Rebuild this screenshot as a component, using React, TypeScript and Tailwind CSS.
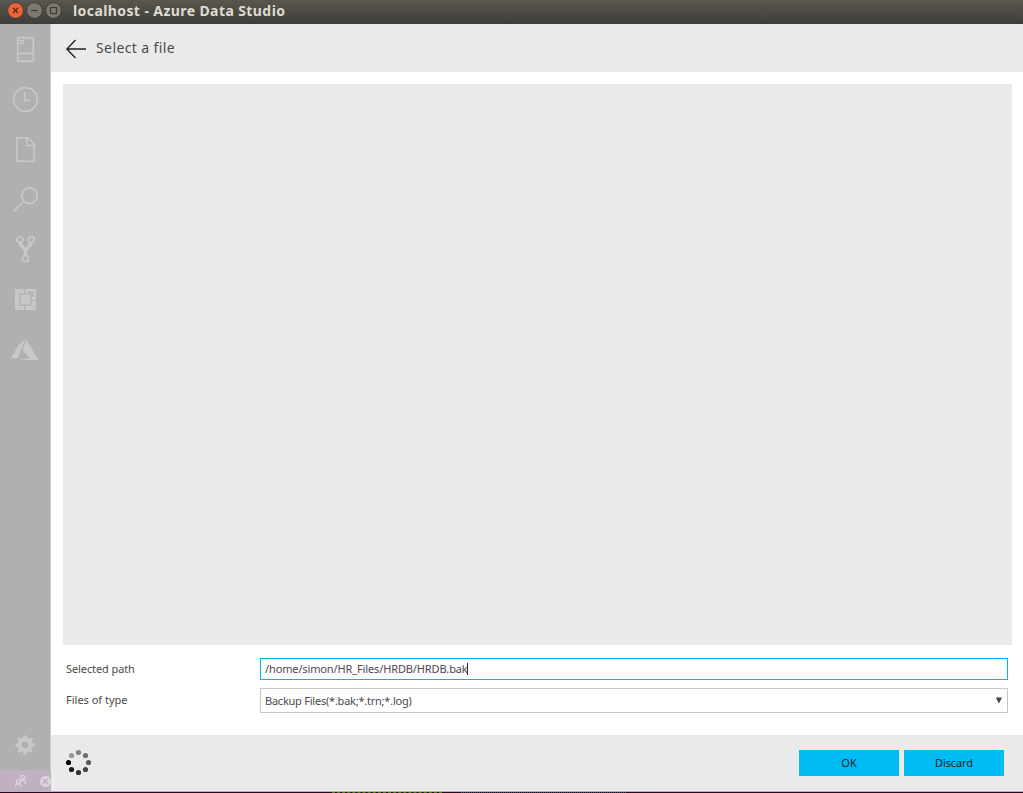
import React from 'react';

// Activity bar icons, each drawn in a 30px box
const activityItems = [
  {
    id: 'servers',
    icon: (
      <svg width="30" height="30" viewBox="0 0 30 30" fill="none" stroke="currentColor" strokeWidth="1.7"><rect x="7.8" y="3.8" width="15.5" height="23.5"/><path d="M7.7 19.5h15.6"/><rect x="10.5" y="6.5" width="3" height="3" strokeWidth="1.2"/></svg>
    ),
  },
  {
    id: 'history',
    icon: (
      <svg width="30" height="30" viewBox="0 0 30 30" fill="none" stroke="currentColor" strokeWidth="1.7"><circle cx="15.5" cy="15.5" r="11.8"/><path d="M14.7 8v8.3h5.5"/></svg>
    ),
  },
  {
    id: 'explorer',
    icon: (
      <svg width="30" height="30" viewBox="0 0 30 30" fill="none" stroke="currentColor" strokeWidth="1.6"><path d="M6.8 3.8H18l6.2 6v17.5H6.8z"/><path d="M16.7 3.8v7.7h7.6"/></svg>
    ),
  },
  {
    id: 'search',
    icon: (
      <svg width="30" height="30" viewBox="0 0 30 30" fill="none" stroke="currentColor" strokeWidth="1.7"><circle cx="19.5" cy="11.5" r="7.8"/><path d="M14 17 3.3 27.7"/></svg>
    ),
  },
  {
    id: 'scm',
    icon: (
      <svg width="30" height="30" viewBox="0 0 30 30" fill="none" stroke="currentColor"><g strokeWidth="1.7"><circle cx="9.8" cy="5.5" r="3"/><circle cx="21.2" cy="5.5" r="3"/><circle cx="15.5" cy="24.5" r="3"/></g><path d="M10.2 9c0 3.5 5.3 4.5 5.3 8v4M20.8 9c0 3.5-5.3 4.5-5.3 8" strokeWidth="3.4"/></svg>
    ),
  },
  {
    id: 'extensions',
    icon: (
      <svg width="30" height="30" viewBox="0 0 30 30" fill="none" stroke="#b0b0b0"><path d="M5 5h21v21H5z" fill="currentColor" stroke="none"/><path d="M10 10.2h11v11H10z" strokeWidth="1.2"/><path d="M14.7 5v5M14.7 21.5V26M21 16.5h5" strokeWidth="1.2"/><path d="M18 8.5h4.5V13" strokeWidth="1.8"/></svg>
    ),
  },
  {
    id: 'azure',
    icon: (
      <svg width="30" height="30" viewBox="0 0 30 30" fill="currentColor"><path d="M15.5 5 8.5 11 1.2 24.2h6.5z"/><path d="m16.3 6-3.8 10.3 7 7.9L9 26.1h19.8z"/></svg>
    ),
  },
];

// Spinner dots, clockwise from the top
const dots = [
  { cx: 13.5, cy: 4.5, fill: '#808080' },
  { cx: 20.5, cy: 7.5, fill: '#6b6b6b' },
  { cx: 23.5, cy: 14.5, fill: '#5a5a5a' },
  { cx: 20.5, cy: 21.5, fill: '#444444' },
  { cx: 13.5, cy: 24.5, fill: '#303030' },
  { cx: 6.5, cy: 21.5, fill: '#1c1c1c' },
  { cx: 3.5, cy: 14.5, fill: '#080808' },
  { cx: 6.5, cy: 7.5, fill: '#969696' },
];

const TitleBar: React.FC = () => (
  <div className="flex h-6 shrink-0 items-start bg-linear-to-b from-[#59574f] to-[#3e3d38]">
    <svg className="shrink-0" width="73" height="24" viewBox="0 0 73 24" fill="none">
      <circle cx="15.5" cy="10.5" r="7.9" fill="#ed6236" stroke="#413c36"/>
      <path d="m13 8 5 5m0-5-5 5" stroke="#56291a" strokeWidth="1.3"/>
      <circle cx="34.5" cy="10.5" r="7.9" fill="#7b7972" stroke="#3c3b36"/>
      <path d="M31 10.5h7" stroke="#3c3b36" strokeWidth="1.2"/>
      <circle cx="53.5" cy="10.5" r="7.9" fill="#7b7972" stroke="#3c3b36"/>
      <rect x="50.5" y="7.5" width="6" height="6" stroke="#3c3b36" strokeWidth="1.2"/>
    </svg>
    <span className="whitespace-nowrap text-[14px] leading-[21px] font-bold tracking-[0.41px] text-[#dfdbd2]">localhost - Azure Data Studio</span>
  </div>
);

const ActivityBar: React.FC = () => (
  <div className="flex w-[51px] shrink-0 flex-col">
    <div className="flex flex-1 flex-col items-center border-r border-[#cfcfcf] bg-[#b0b0b0] text-[#c8c8c8]">
      {activityItems.map((item) => (
        <div key={item.id} className="flex h-[50px] w-[50px] items-center justify-center">
          {item.icon}
        </div>
      ))}
      <svg className="mt-auto mb-[14px]" width="22" height="22" viewBox="0 0 22 22" fill="none" stroke="currentColor">
        <circle cx="11" cy="11" r="5.3" strokeWidth="4"/>
        <path d="M11 1.5v4M11 16.5v4M1.5 11h4M16.5 11h4M4.3 4.3l2.8 2.8M14.9 14.9l2.8 2.8M4.3 17.7l2.8-2.8M14.9 7.1l2.8-2.8" strokeWidth="3.6"/>
      </svg>
    </div>
    <div className="h-[22px] bg-[#bfb1bf] text-[#dcd6dc]">
      <svg width="51" height="22" viewBox="0 0 51 22" fill="none" stroke="currentColor" strokeWidth="1.3">
        <circle cx="22.7" cy="7.3" r="2"/>
        <path d="m20.5 11.5 2.2-2 2.5 2V14"/>
        <circle cx="18.3" cy="11.8" r="2"/>
        <path d="M15.5 17v-1.5l2.8-2 2.5 2V17"/>
        <circle cx="45.5" cy="11.5" r="5.5" fill="currentColor" stroke="none"/>
        <path d="m43 9 5 5m0-5-5 5" stroke="#bfb1bf" strokeWidth="1.5"/>
      </svg>
    </div>
  </div>
);

const FileDialog: React.FC = () => (
  <div className="flex min-w-0 flex-1 flex-col bg-[#fffffe]">
    <div className="flex h-12 shrink-0 items-center bg-[#eaeaea] pl-[15px]">
      <svg className="mt-[2px]" width="22" height="20" viewBox="0 0 22 20" fill="none" stroke="#222" strokeWidth="1.4"><path d="M20 10H1M9.500 1 .9 10l8.600 9"/></svg>
      <span className="mb-[2px] ml-2 text-[14px] tracking-[0.4px] text-[#4a4a4a]">Select a file</span>
    </div>

    {/* Folder tree */}
    <div className="mt-3 mr-[11px] ml-3 h-[561px] shrink-0 bg-[#eaeaea]" />

    {/* Path and file type */}
    <div className="mt-[13px] mr-[15px] ml-[15px] flex flex-1 flex-col gap-2 text-[11px] text-[#4a4a4a]">
      <div className="flex h-[22px] items-center">
        <span className="w-[194px] tracking-[-0.1px]">Selected path</span>
        <div className="flex h-[22px] flex-1 items-center border border-[#00b4eb] bg-white pl-1">
          <span className="whitespace-nowrap tracking-[-0.13px]">/home/simon/HR_Files/HRDB/HRDB.bak</span>
          <span className="-ml-px h-3 w-px bg-[#222]" />
        </div>
      </div>
      <div className="flex h-[25px] items-center">
        <span className="w-[194px]">Files of type</span>
        <div className="flex h-[25px] flex-1 items-center justify-between border border-[#c8c8c8] bg-white pr-[5px] pl-1">
          <span className="pt-[2px] tracking-[-0.23px]">Backup Files(*.bak;*.trn;*.log)</span>
          <svg width="7" height="7" viewBox="0 0 7 7" fill="#444"><path d="M.8.5H7L3.900 6.500z"/></svg>
        </div>
      </div>
    </div>

    <div className="flex h-14 shrink-0 items-center justify-between bg-[#eaeaea] pr-[19px] pl-[14px]">
      <svg className="-mt-[2px]" width="28" height="28" viewBox="0 0 28 28">
        {dots.map((dot) => (
          <circle key={dot.fill} cx={dot.cx} cy={dot.cy} r="2.6" fill={dot.fill} />
        ))}
      </svg>
      <div className="flex gap-[5px] text-[11px] text-[#222]">
        <button className="h-[26px] w-[100px] bg-[#00bcf5]">OK</button>
        <button className="h-[26px] w-[100px] bg-[#00bcf5] tracking-[-0.1px]">Discard</button>
      </div>
    </div>
    <div className="h-px shrink-0 bg-[#b9afb9]" />
  </div>
);

const App: React.FC = () => {
  return (
    <div className="flex h-[793px] w-[1023px] flex-col overflow-hidden bg-[#2c0720] font-['Noto_Sans',sans-serif]">
      <TitleBar />
      <div className="flex h-[768px] shrink-0">
        <ActivityBar />
        <FileDialog />
      </div>
      {/* Terminal window edge behind the app */}
      <div className="flex h-px pl-[332px]">
        <div className="w-[110px] border-t border-dashed border-[#4e7a16]" />
        <div className="ml-[19px] w-[165px] border-t border-dotted border-[#3c4a6c]" />
      </div>
    </div>
  );
};

export default App;
